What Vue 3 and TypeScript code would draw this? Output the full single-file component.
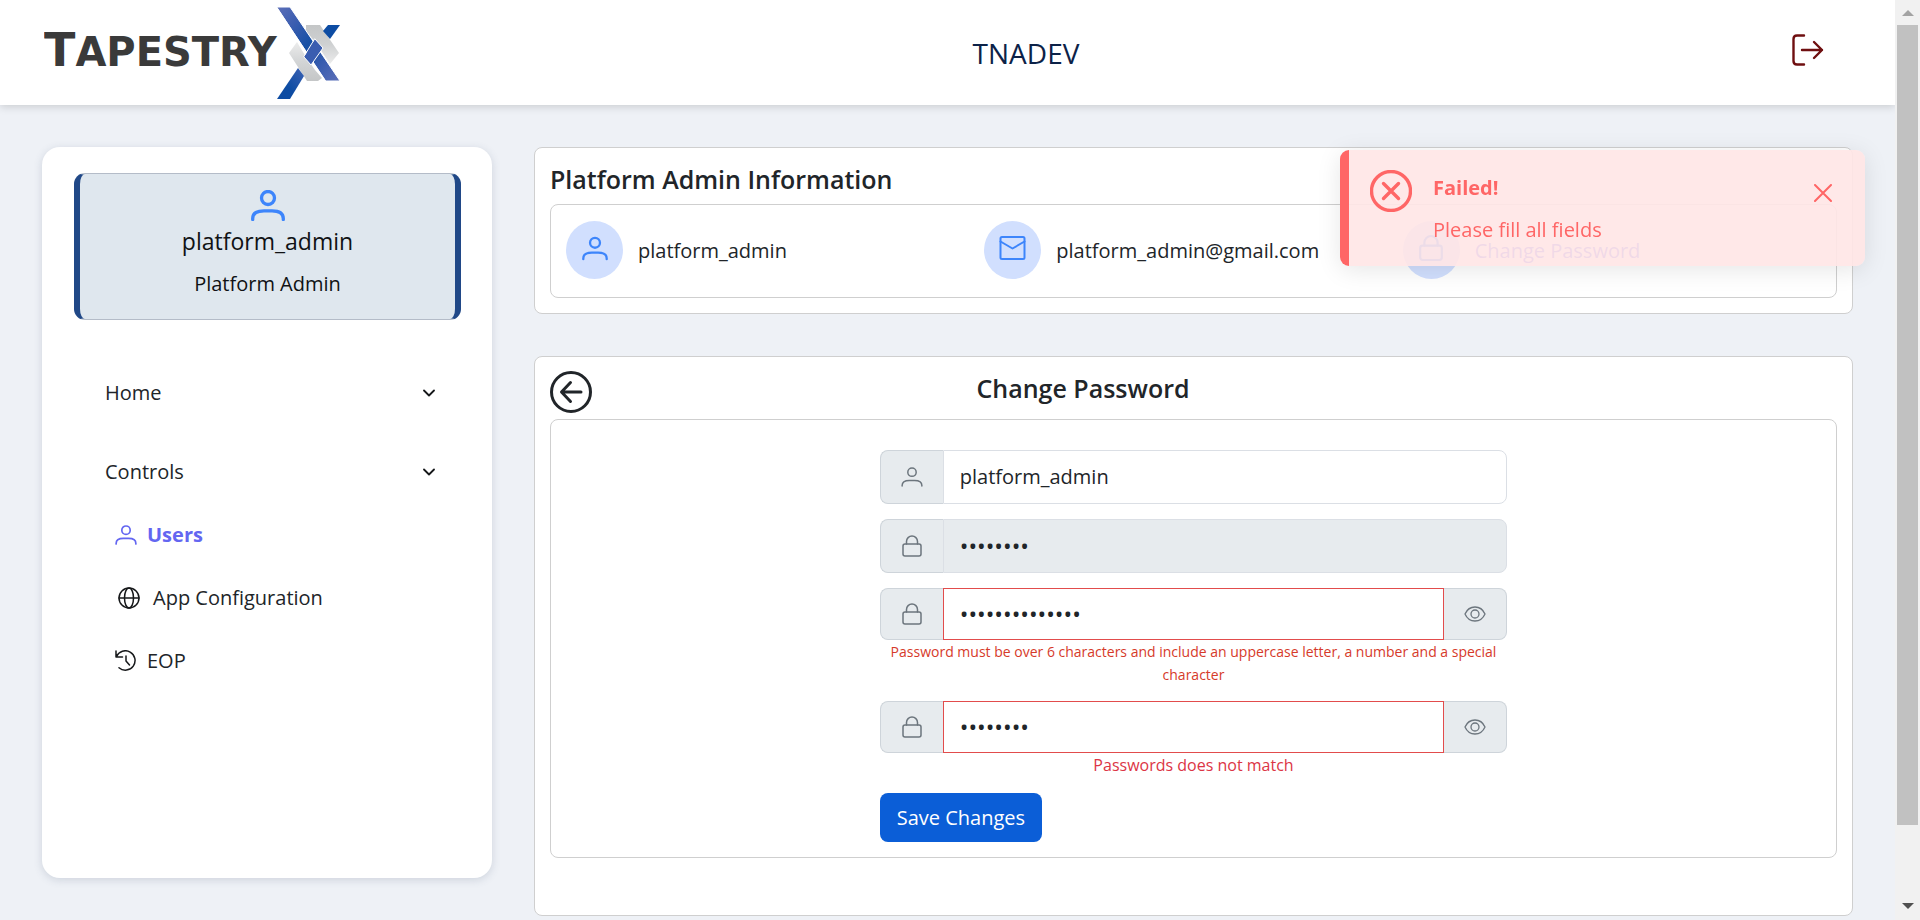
<script setup lang="ts">
import { ref } from 'vue'

interface FormRow {
  id: string
  label: string
  type: 'text' | 'password'
  icon: 'user' | 'lock'
  disabled?: boolean
  error?: string
  toggle?: boolean
  size: string
}

const rows: FormRow[] = [
  { id: 'username', label: 'Username', type: 'text', icon: 'user', size: 'plain' },
  { id: 'current', label: 'Current password', type: 'password', icon: 'lock', disabled: true, size: 'plain' },
  {
    id: 'next', label: 'New password', type: 'password', icon: 'lock', toggle: true, size: 'small',
    error: 'Password must be over 6 characters and include an uppercase letter, a number and a special character',
  },
  { id: 'confirm', label: 'Confirm password', type: 'password', icon: 'lock', toggle: true, size: 'small', error: 'Passwords does not match' },
]

const values = ref<Record<string, string>>({
  username: 'platform_admin',
  current: 'password',
  next: 'passwordsecret',
  confirm: 'password',
})
const revealed = ref<Record<string, boolean>>({})
const toastOpen = ref(true)
</script>

<template>
  <div class="page">
    <svg class="defs" aria-hidden="true">
      <symbol id="i-user" viewBox="0 0 34 31">
        <circle cx="17" cy="8" r="6.5" />
        <path d="M1.7 29.500V28.500C1.7 22.500 6.500 20.800 13 20.800H21C27.500 20.800 32.300 22.500 32.300 28.500V29.500" />
      </symbol>
      <symbol id="i-lock" viewBox="0 0 20 22">
        <rect x="1" y="9" width="18" height="12" rx="2" />
        <path d="M4.500 9V6.500a5.500 5.500 0 0 1 11 0V9" />
      </symbol>
      <symbol id="i-mail" viewBox="0 0 26 24">
        <rect x="1" y="1" width="24" height="22" rx="1.500" />
        <path d="M1 5.500L13 12.500L25 5.500" />
      </symbol>
      <symbol id="i-eye" viewBox="0 0 22 16">
        <path d="M1 8C3 3.500 6.500 1 11 1S19 3.500 21 8C19 12.500 15.500 15 11 15S3 12.500 1 8Z" />
        <circle cx="11" cy="8" r="4" />
      </symbol>
      <symbol id="i-chevron" viewBox="0 0 12 8">
        <path d="M1 1.500L6 6.500L11 1.500" />
      </symbol>
    </svg>

    <header class="topbar">
      <svg class="logo" viewBox="0 0 296 94" role="img" aria-label="Tapestry X">
        <defs>
          <linearGradient id="g-band" x1="0" y1="0" x2="1" y2="1">
            <stop offset="0" stop-color="#5c6fb8" />
            <stop offset=".25" stop-color="#3a5db0" />
            <stop offset=".5" stop-color="#1650a5" />
            <stop offset=".75" stop-color="#3a5db0" />
            <stop offset="1" stop-color="#5c6fb8" />
          </linearGradient>
          <linearGradient id="g-low" x1="1" y1="0" x2="0" y2="1">
            <stop offset="0" stop-color="#3d62b3" />
            <stop offset=".6" stop-color="#0d4ca3" />
          </linearGradient>
          <linearGradient id="g-grey" x1="0" y1="0" x2="0" y2="1">
            <stop offset="0" stop-color="#c4c6c7" />
            <stop offset=".5" stop-color="#cfd1d2" />
            <stop offset="1" stop-color="#ececec" />
          </linearGradient>
          <linearGradient id="g-grey2" x1="0" y1="0" x2="0" y2="1">
            <stop offset="0" stop-color="#ececec" />
            <stop offset=".5" stop-color="#d3d5d6" />
            <stop offset="1" stop-color="#c4c6c7" />
          </linearGradient>
        </defs>
        <text class="word" x="0" y="60"><tspan class="word-cap">T</tspan>APESTRY</text>
        <path d="M262 19H276L295 47L286 58L272 37L266 30L262 27Z" fill="url(#g-grey)" />
        <path d="M253 36L245 47L263 75H274L278 72L271 64L262 51Z" fill="url(#g-grey2)" />
        <path class="edge" d="M233 1H246L296 75H282Z" fill="url(#g-band)" />
        <path class="edge" d="M271 33L279 42L267 59L260 51Z" fill="#3a5db0" />
        <path d="M233 93H246L260 70L254 62Z" fill="url(#g-low)" />
        <path d="M284 19H296L286 33L279 25Z" fill="#0d4ca3" />
      </svg>
      <h1 class="site">TNADEV</h1>
      <button class="bare logout" type="button" aria-label="Log out">
        <svg viewBox="0 0 32 32">
          <path d="M12 1.500H5Q1.500 1.500 1.500 5V27Q1.500 30.500 5 30.500H12M10 16H30M22 8L30 16L22 24" />
        </svg>
      </button>
    </header>

    <div class="layout">
      <aside class="sidebar">
        <section class="profile">
          <svg class="profile-icon"><use href="#i-user" /></svg>
          <p class="profile-name">platform_admin</p>
          <p class="profile-role">Platform Admin</p>
        </section>
        <nav>
          <button class="bare group" type="button">Home<svg class="chevron"><use href="#i-chevron" /></svg></button>
          <button class="bare group" type="button">Controls<svg class="chevron"><use href="#i-chevron" /></svg></button>
          <a class="item active" href="#users"><svg class="nav-user"><use href="#i-user" /></svg>Users</a>
          <a class="item wide" href="#config">
            <svg class="nav-icon" viewBox="0 0 22 22">
              <circle cx="11" cy="11" r="10" /><ellipse cx="11" cy="11" rx="4.500" ry="10" /><path d="M1 11H21" />
            </svg>App Configuration
          </a>
          <a class="item" href="#eop">
            <svg class="nav-icon" viewBox="0 0 22 22">
              <path d="M1 1V7H7.500M1.500 6.500A9.700 9.700 0 1 1 4 17.800M11 6V11L14.500 15" />
            </svg>EOP
          </a>
        </nav>
      </aside>

      <main class="content">
        <section class="card">
          <h2 class="card-title">Platform Admin Information</h2>
          <div class="panel facts">
            <div class="fact"><span class="disc"><svg class="disc-user"><use href="#i-user" /></svg></span><span class="fact-text">platform_admin</span></div>
            <div class="fact"><span class="disc"><svg class="disc-mail"><use href="#i-mail" /></svg></span><span class="fact-text">platform_admin@gmail.com</span></div>
            <a class="fact link" href="#password"><span class="disc"><svg class="disc-lock"><use href="#i-lock" /></svg></span><span class="fact-text">Change Password</span></a>
          </div>
        </section>

        <section class="card form-card">
          <div class="form-head">
            <button class="bare back" type="button" aria-label="Back">
              <svg viewBox="0 0 42 42"><circle cx="21" cy="21" r="19.500" /><path d="M31 21H12M20.500 11.500L11.500 21L20.500 30.500" /></svg>
            </button>
            <h2 class="card-title centred">Change Password</h2>
          </div>
          <div class="panel form-panel">
            <form class="form" @submit.prevent>
              <div v-for="row in rows" :key="row.id" class="row">
                <div class="group-box" :class="[row.size, { invalid: row.error }]">
                  <label class="addon" :for="row.id" :aria-label="row.label">
                    <svg :class="'field-' + row.icon"><use :href="'#i-' + row.icon" /></svg>
                  </label>
                  <input
                    :id="row.id"
                    v-model="values[row.id]"
                    class="input"
                    :type="revealed[row.id] ? 'text' : row.type"
                    :disabled="row.disabled"
                    autocomplete="off"
                  >
                  <button
                    v-if="row.toggle"
                    class="addon end"
                    type="button"
                    aria-label="Show password"
                    @click="revealed[row.id] = !revealed[row.id]"
                  >
                    <svg class="field-eye"><use href="#i-eye" /></svg>
                  </button>
                </div>
                <p v-if="row.error" class="error" :class="row.id">{{ row.error }}</p>
              </div>
              <button class="save" type="submit">Save Changes</button>
            </form>
          </div>
        </section>
      </main>
    </div>

    <div v-if="toastOpen" class="toast" role="alert">
      <svg class="toast-icon" viewBox="0 0 42 42"><circle cx="21" cy="21" r="19.500" /><path d="M13.500 13.500L28.500 28.500M28.500 13.500L13.500 28.500" /></svg>
      <div class="toast-text">
        <strong>Failed!</strong>
        <p>Please fill all fields</p>
      </div>
      <button class="bare close" type="button" aria-label="Close" @click="toastOpen = false">
        <svg viewBox="0 0 18 18"><path d="M1 1L17 17M17 1L1 17" /></svg>
      </button>
    </div>

    <div class="scrollbar" aria-hidden="true">
      <span class="arrow up"></span>
      <span class="thumb"></span>
      <span class="arrow down"></span>
    </div>
  </div>
</template>

<style>
body {
  margin: 0;
  background: #eef1f6;
}
</style>

<style scoped>
.page {
  min-height: 100vh;
  padding-right: 25px;
  box-sizing: border-box;
  background: #eef1f6;
  color: #212529;
  font: 20px/30px "Open Sans", "Noto Sans", sans-serif;
}
.page *, .page *::before { box-sizing: border-box; }
h1, h2, p { margin: 0; font-weight: 400; }
svg { display: block; flex: none; fill: none; stroke: currentColor; stroke-linecap: round; stroke-linejoin: round; }
.defs { position: absolute; width: 0; height: 0; }
.bare { border: 0; padding: 0; background: none; color: inherit; font: inherit; cursor: pointer; }

.topbar {
  display: flex;
  align-items: center;
  height: 105px;
  padding: 0 71px 0 44px;
  background: #fff;
  box-shadow: 0 2px 8px rgba(0, 0, 0, .15);
}
.logo { width: 296px; height: 94px; stroke: none; }
.word { fill: #3a3a3a; stroke: none; font: bold 40px "DejaVu Sans", sans-serif; }
.word-cap { font-size: 46px; }
.edge { stroke: #fff; stroke-width: 1; }
.site { flex: 1; padding-right: 80px; color: #0c2248; font-size: 28px; line-height: 36px; text-align: center; }
.logout { color: #6f0f10; margin-bottom: 5px; }
.logout svg { width: 32px; height: 32px; stroke-width: 2.4; }

.layout { display: flex; align-items: flex-start; gap: 42px; padding: 42px 42px 3px; }
.sidebar {
  flex: 0 0 450px;
  min-height: 731px;
  padding: 26px 31px 26px 32px;
  border-radius: 18px;
  background: #fff;
  box-shadow: 0 2px 8px rgba(60, 80, 110, .18);
}
.profile {
  display: flex;
  flex-direction: column;
  align-items: center;
  height: 147px;
  padding-top: 16px;
  border: solid #b4bcc8;
  border-width: 1px 6px;
  border-left-color: #204887;
  border-right-color: #204887;
  border-radius: 11px;
  background: #dfe7ee;
  color: #101214;
}
.profile-icon { width: 34px; height: 31px; color: #3d85fb; stroke-width: 3.3; }
.profile-name { margin-top: 4px; font-size: 23px; line-height: 32px; }
.profile-role { margin-top: 12px; }
nav { display: flex; flex-direction: column; padding: 58px 26px 0 31px; }
.group { display: flex; align-items: center; justify-content: space-between; height: 30px; margin-bottom: 49px; text-align: left; }
.group + .item { margin-top: -16px; }
.chevron { width: 12px; height: 8px; color: #16181a; stroke-width: 1.8; }
.item { display: flex; align-items: center; gap: 10px; height: 30px; margin-bottom: 33px; padding-left: 10px; color: #212529; text-decoration: none; }
.item.wide { gap: 13px; padding-left: 13px; }
.item.active { color: #6366f1; font-weight: 700; }
.nav-user { width: 22px; height: 20px; stroke-width: 2.6; }
.nav-icon { width: 22px; height: 22px; color: #16181a; stroke-width: 1.5; }

.content { flex: 1; min-width: 0; display: flex; flex-direction: column; gap: 42px; }
.card { padding: 15px; border: 1px solid #cfcfcf; border-radius: 8px; background: #fff; }
.card-title { font-size: 25px; line-height: 32px; font-weight: 600; }
.panel { border: 1px solid #cfcfcf; border-radius: 8px; }
.facts { display: grid; grid-template-columns: repeat(3, 1fr); margin-top: 9px; padding: 16px 15px 18px; }
.fact { display: flex; align-items: center; gap: 15px; color: #212529; text-decoration: none; }
.fact-text { padding-top: 2px; }
.link { color: #6366f1; }
.disc { display: grid; place-items: center; width: 57px; height: 58px; padding-bottom: 4px; border-radius: 50%; background: #d1dffe; color: #3d85fb; }
.disc-user { width: 26px; height: 25px; stroke-width: 3; }
.disc-mail { width: 27px; height: 24px; stroke-width: 2; }
.disc-lock { width: 24px; height: 28px; stroke-width: 1.8; }

.form-card { padding-bottom: 57px; }
.form-head { display: flex; align-items: flex-start; height: 47px; }
.back { margin-top: -1px; }
.back svg { width: 42px; height: 42px; stroke-width: 3; }
.centred { flex: 1; padding-right: 263px; text-align: center; }
.form-panel { padding: 30px 15px 15px; }
.form { width: 50%; min-width: 627px; margin: 0 auto; }
.row { margin-bottom: 15px; }
.group-box { display: flex; height: 54px; }
.group-box.small { height: 52px; }
.addon {
  display: grid;
  place-items: center;
  flex: 0 0 63px;
  padding: 0;
  border: 1px solid #ced4da;
  border-right: 0;
  border-radius: 8px 0 0 8px;
  background: #e7ebee;
  color: #6c757d;
}
.addon.end { border: 1px solid #ced4da; border-left: 0; border-radius: 0 8px 8px 0; }
.input {
  flex: 1;
  min-width: 0;
  padding: 0 16px;
  border: 1px solid #dbdfe5;
  border-radius: 0 8px 8px 0;
  outline: 0;
  background: #fff;
  color: #212529;
  font: inherit;
}
.input[type="password"] { font-size: 23px; }
.input:disabled { background: #e7ebee; }
.invalid .input { border-color: #e24c4c; border-radius: 0; }
.field-user { width: 22px; height: 20px; stroke-width: 2.3; }
.field-lock { width: 20px; height: 22px; stroke-width: 1.5; }
.field-eye { width: 22px; height: 16px; stroke-width: 1.3; }
.error { color: #dc3545; font-size: 16px; line-height: 25px; text-align: center; }
.error.next { color: #d63a2a; font-size: 14px; line-height: 23px; }
.save { height: 49px; padding: 0 17px; border: 0; border-radius: 8px; background: #0b5ed7; color: #fff; font: inherit; cursor: pointer; }

.toast {
  position: fixed;
  top: 150px;
  right: 55px;
  display: flex;
  align-items: flex-start;
  width: 525px;
  height: 116px;
  padding: 20px 33px 0 21px;
  border-left: 9px solid #ff6666;
  border-radius: 9px;
  background: rgba(255, 230, 230, .9);
  box-shadow: 0 4px 24px rgba(0, 0, 0, .1);
  color: #ff6666;
}
.toast-icon { width: 42px; height: 42px; stroke-width: 3.4; }
.toast-text { flex: 1; padding: 3px 0 0 21px; }
.toast-text strong { display: block; font-weight: 700; }
.toast-text p { margin-top: 12px; }
.close { margin-top: 14px; }
.close svg { width: 18px; height: 18px; stroke-width: 2; }

.scrollbar {
  position: fixed;
  top: 0;
  right: 0;
  bottom: 0;
  display: flex;
  flex-direction: column;
  align-items: center;
  width: 25px;
  padding: 10px 0 11px;
  background: #f1f1f1;
}
.arrow { border: 6px solid transparent; border-top-width: 0; border-bottom-width: 0; }
.up { border-bottom: 6px solid #a3a3a3; }
.down { margin-top: auto; border-top: 6px solid #505050; }
.thumb { width: 21px; height: 89%; margin-top: 9px; background: #c1c1c1; }
</style>
